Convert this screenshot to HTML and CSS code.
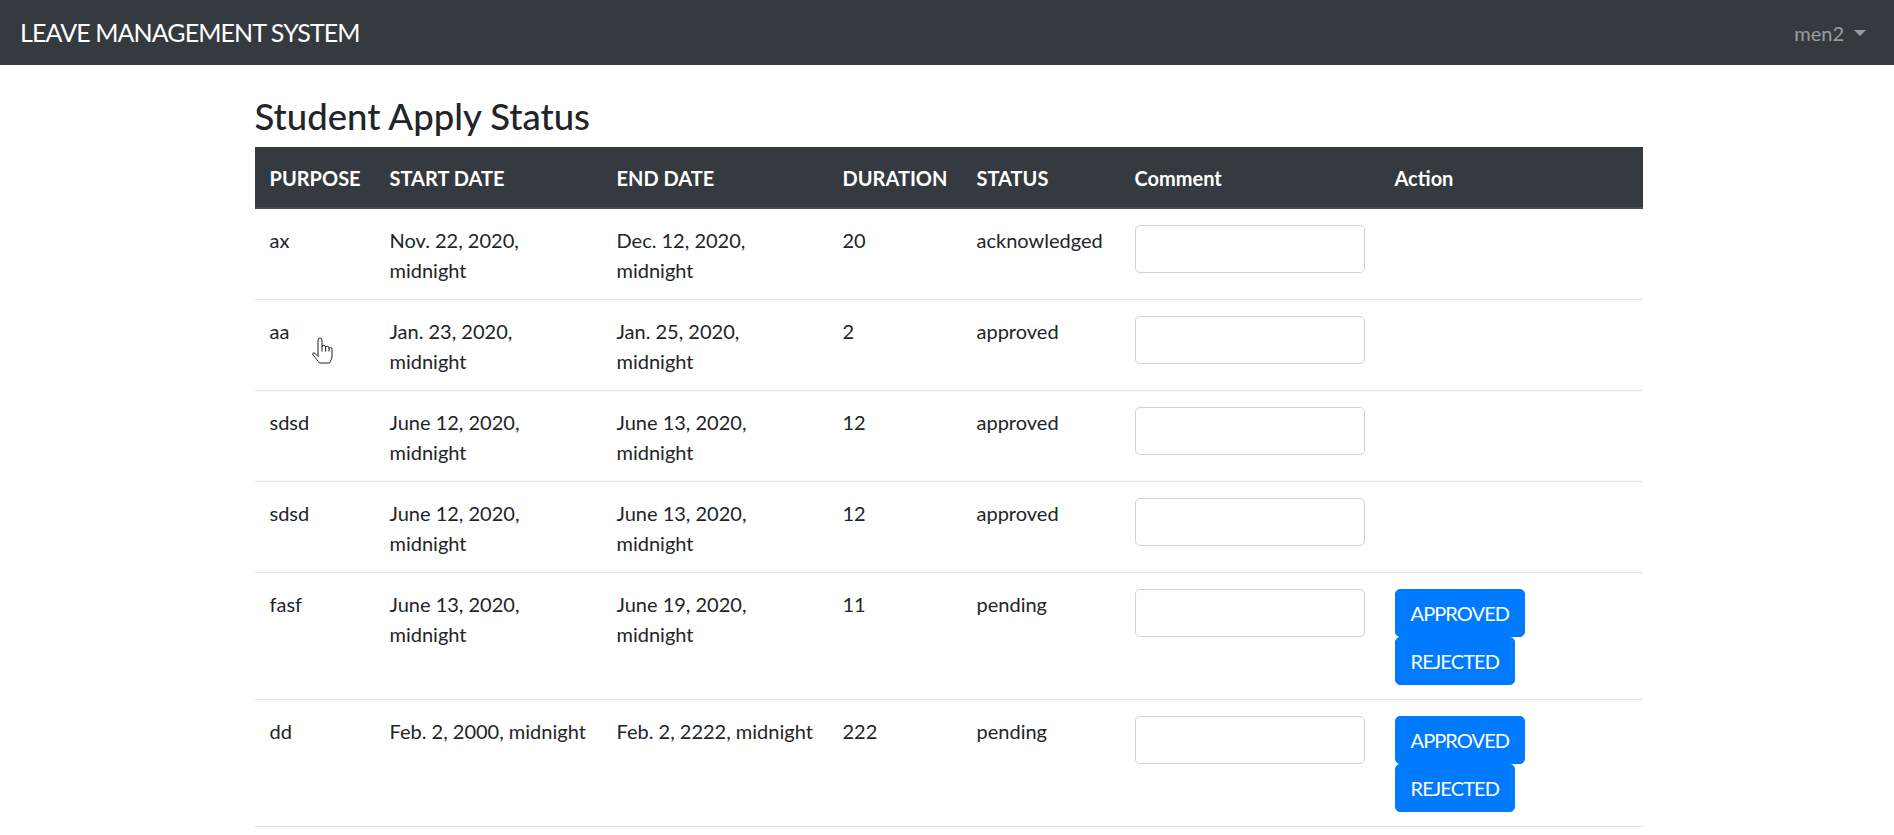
FILE: index.html
```html
<!DOCTYPE html>
<html lang="en">
<head>
<meta charset="utf-8">
<title>Leave Management System</title>
<link rel="stylesheet" href="styles.css">
</head>
<body>
<nav class="navbar">
  <a class="brand" href="#">LEAVE MANAGEMENT SYSTEM</a>
  <a class="user" href="#">men2<span class="caret"></span></a>
</nav>
<main class="page">
  <div class="container">
    <h3 class="title">Student Apply Status</h3>
    <table class="table">
      <colgroup>
        <col class="c-purpose"><col class="c-start"><col class="c-end"><col class="c-dur"><col class="c-status"><col class="c-comment"><col class="c-action">
      </colgroup>
      <thead>
        <tr><th>PURPOSE</th><th>START DATE</th><th>END DATE</th><th>DURATION</th><th>STATUS</th><th>Comment</th><th>Action</th></tr>
      </thead>
      <tbody>
        <tr><td>ax</td><td>Nov. 22, 2020, midnight</td><td>Dec. 12, 2020, midnight</td><td>20</td><td>acknowledged</td><td><input class="comment" type="text"></td><td></td></tr>
        <tr><td>aa</td><td>Jan. 23, 2020, midnight</td><td>Jan. 25, 2020, midnight</td><td>2</td><td>approved</td><td><input class="comment" type="text"></td><td></td></tr>
        <tr><td>sdsd</td><td>June 12, 2020, midnight</td><td>June 13, 2020, midnight</td><td>12</td><td>approved</td><td><input class="comment" type="text"></td><td></td></tr>
        <tr><td>sdsd</td><td>June 12, 2020, midnight</td><td>June 13, 2020, midnight</td><td>12</td><td>approved</td><td><input class="comment" type="text"></td><td></td></tr>
        <tr><td>fasf</td><td>June 13, 2020, midnight</td><td>June 19, 2020, midnight</td><td>11</td><td>pending</td><td><input class="comment" type="text"></td><td><button class="btn">APPROVED</button><button class="btn">REJECTED</button></td></tr>
        <tr><td>dd</td><td class="nowrap">Feb. 2, 2000, midnight</td><td class="nowrap">Feb. 2, 2222, midnight</td><td>222</td><td>pending</td><td><input class="comment" type="text"></td><td><button class="btn">APPROVED</button><button class="btn">REJECTED</button></td></tr>
      </tbody>
    </table>
  </div>
</main>
<svg class="cursor" width="24" height="28" viewBox="0 0 24 28" aria-hidden="true">
  <path d="M7 13 V3 a2 2 0 0 1 4 0 V10 a1.75 1.75 0 0 1 3.5 0 V11 a1.75 1.75 0 0 1 3.5 0 V12 a1.5 1.5 0 0 1 3 0 V19 c0 3 -1.5 5 -2.5 7 H8.5 c-1.5 -2 -4 -5 -6.5 -8 c-1 -1.3 0.4 -2.9 1.9 -1.8 L7 19.5 Z" fill="#fff" stroke="#222" stroke-width="1" stroke-linejoin="round"/>
  <path d="M11 10 V14.5 M14.5 11 V14.5 M18 12 V14.5" stroke="#222" stroke-width="1" fill="none"/>
</svg>
</body>
</html>
```

FILE: styles.css
```css
* { box-sizing: border-box; }

html, body {
  margin: 0;
  padding: 0;
  background: #fff;
}

body {
  font-family: Lato, "Noto Sans", sans-serif;
  font-size: 20px;
  line-height: 30px;
  color: #212529;
}

.navbar {
  display: flex;
  align-items: center;
  justify-content: space-between;
  height: 65px;
  padding: 0 28px 0 20px;
  background: #343a40;
}

.brand {
  color: #fff;
  text-decoration: none;
  font-size: 25px;
  line-height: 37px;
  letter-spacing: -0.9px;
}

.user {
  display: flex;
  align-items: center;
  color: rgba(255, 255, 255, 0.5);
  text-decoration: none;
  font-size: 20px;
}

.caret {
  display: inline-block;
  margin-left: 10px;
  width: 0;
  height: 0;
  border-top: 6px solid rgba(255, 255, 255, 0.5);
  border-left: 6px solid transparent;
  border-right: 6px solid transparent;
}

.page {
  padding: 30px 0 0 3px;
}

.container {
  width: 1388px;
  margin: 0 auto;
}

.title {
  margin: 0 0 10px;
  font-size: 36.5px;
  line-height: 42px;
  font-weight: 500;
}

.table {
  width: 100%;
  table-layout: fixed;
  border-collapse: collapse;
}

.c-purpose { width: 120px; }
.c-start { width: 227px; }
.c-end { width: 226px; }
.c-dur { width: 134px; }
.c-status { width: 158px; }
.c-comment { width: 260px; }
.c-action { width: 263px; }

.table th,
.table td {
  padding: 16px 15px 14px;
  text-align: left;
  vertical-align: top;
}

.table th {
  background: #343a40;
  color: #fff;
  font-weight: 700;
  border-bottom: 2px solid #454d55;
}

.table td {
  border-top: 1px solid #dee2e6;
}

.table tbody tr:first-child td {
  border-top: 0;
}

.table tbody tr:last-child td {
  border-bottom: 1px solid #dee2e6;
}

.nowrap {
  white-space: nowrap;
}

.comment {
  display: block;
  width: 230px;
  height: 48px;
  margin: 0;
  padding: 0 10px;
  border: 1px solid #ced4da;
  border-radius: 5px;
  background: #fff;
  font: inherit;
}

.btn {
  display: block;
  margin: 0;
  padding: 8px 15px;
  border: 1px solid #007bff;
  border-radius: 5px;
  background: #007bff;
  color: #fff;
  font: inherit;
  font-size: 20px;
  line-height: 30px;
  letter-spacing: -0.9px;
  cursor: pointer;
}

.cursor {
  position: absolute;
  left: 311px;
  top: 337px;
}
```
